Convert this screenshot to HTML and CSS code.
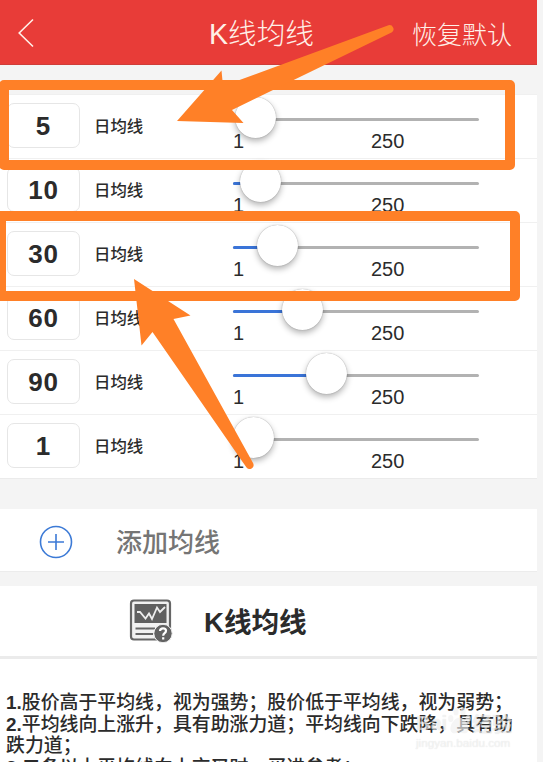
FILE: index.html
```html
<!DOCTYPE html>
<html lang="zh-CN">

<head>
  <meta charset="UTF-8">
  <meta name="viewport" content="width=device-width, initial-scale=1.0">
  <title>K线均线</title>
  <link rel="stylesheet" href="styles.css">
</head>

<body>

  <div class="screen">
    <header class="navbar">
      <svg class="back" viewBox="0 0 16 30" width="16" height="30">
        <path d="M15 1.5 L1.2 15 L15 28.5" />
      </svg>
      <h1>K线均线</h1>
      <span class="reset">恢复默认</span>
    </header>

    <!-- Moving average rows -->
    <div class="ma-list">
      <div class="ma-row">
        <div class="ma-input">5</div>
        <span class="ma-label">日均线</span>
        <div class="slider">
          <div class="track"><div class="fill" style="width: 0"></div><div class="thumb" style="left: 22.5px"></div></div>
          <div class="range"><span>1</span><span>250</span></div>
        </div>
      </div>
      <div class="ma-row">
        <div class="ma-input">10</div>
        <span class="ma-label">日均线</span>
        <div class="slider">
          <div class="track"><div class="fill" style="width: 27px"></div><div class="thumb" style="left: 27px"></div></div>
          <div class="range"><span>1</span><span>250</span></div>
        </div>
      </div>
      <div class="ma-row">
        <div class="ma-input">30</div>
        <span class="ma-label">日均线</span>
        <div class="slider">
          <div class="track"><div class="fill" style="width: 44px"></div><div class="thumb" style="left: 44px"></div></div>
          <div class="range"><span>1</span><span>250</span></div>
        </div>
      </div>
      <div class="ma-row">
        <div class="ma-input">60</div>
        <span class="ma-label">日均线</span>
        <div class="slider">
          <div class="track"><div class="fill" style="width: 69px"></div><div class="thumb" style="left: 69px"></div></div>
          <div class="range"><span>1</span><span>250</span></div>
        </div>
      </div>
      <div class="ma-row">
        <div class="ma-input">90</div>
        <span class="ma-label">日均线</span>
        <div class="slider">
          <div class="track"><div class="fill" style="width: 93.5px"></div><div class="thumb" style="left: 93.5px"></div></div>
          <div class="range"><span>1</span><span>250</span></div>
        </div>
      </div>
      <div class="ma-row">
        <div class="ma-input">1</div>
        <span class="ma-label">日均线</span>
        <div class="slider">
          <div class="track"><div class="fill" style="width: 0"></div><div class="thumb" style="left: 20px"></div></div>
          <div class="range"><span>1</span><span>250</span></div>
        </div>
      </div>
    </div>

    <div class="add-row">
      <svg viewBox="0 0 34 34" width="34" height="34">
        <circle cx="17" cy="17" r="15.5" />
        <path d="M9 17 H25 M17 9 V25" />
      </svg>
      <span>添加均线</span>
    </div>

    <!-- Help section -->
    <div class="help-title">
      <svg viewBox="0 0 44 44" width="44" height="44">
        <rect x="2" y="1.5" width="39" height="39" rx="3" fill="#f1f1f1" stroke="#666" stroke-width="2.2" />
        <rect x="5.5" y="5" width="32" height="19" fill="#606060" />
        <path d="M8 13 L11 13 L16.500 19.500 L20 14.500 L23 20 L28 8.500 L31 13 L36 8" fill="none" stroke="#eee" stroke-width="1.8" />
        <path d="M6.500 29.500 H26 M6.500 35 H24" stroke="#666" stroke-width="1.8" />
        <circle cx="34" cy="34.500" r="9.200" fill="#626262" stroke="#f1f1f1" stroke-width="1" />
        <path d="M31 32 Q31.200 29.300 34 29.300 Q37 29.300 37 31.800 Q37 33.300 35.500 34.200 Q34.200 35 34.200 36.800 M34.200 38.300 V40.500" fill="none" stroke="#fff" stroke-width="2.200" />
      </svg>
      <h2>K线均线</h2>
    </div>
    <div class="help-text">
      <p><b>1.</b>股价高于平均线，视为强势；股价低于平均线，视为弱势；</p>
      <p><b>2.</b>平均线向上涨升，具有助涨力道；平均线向下跌降，具有助</p>
      <p>跌力道；</p>
      <p><b>3.</b>二条以上平均线向上交叉时，买进参考；</p>
    </div>
  </div>

  <!-- Highlight boxes and arrows over the list -->
  <svg class="marks" viewBox="0 0 543 762" width="543" height="762">
    <rect x="4" y="85" width="506" height="80" />
    <rect x="1" y="216" width="514" height="80" />
    <path d="M177 121 L221.5 70.5 L223 86 L388.5 25.3 A4 4 0 0 1 392 32.3 L232 110 L243.5 123 Z" />
    <path d="M134 279 L190.5 315.5 L173.5 319 L253.3 463.5 A4 4 0 0 1 246.5 467.5 L152.5 332 L141.5 345.5 Z" />
  </svg>

  <div class="watermark">
    <div class="brand">
      <span>Bai</span>
      <svg viewBox="0 0 28 32" width="25" height="28">
        <ellipse cx="4" cy="13" rx="3" ry="4" />
        <ellipse cx="10" cy="5" rx="3" ry="4.5" />
        <ellipse cx="18" cy="5" rx="3" ry="4.5" />
        <ellipse cx="24" cy="13" rx="3" ry="4" />
        <path d="M14 12 C20 12 26 22 24 27 C22 32 17 29 14 29 C11 29 6 32 4 27 C2 22 8 12 14 12 Z" />
      </svg>
      <span>经验</span>
    </div>
    <div class="site">jingyan.baidu.com</div>
  </div>

</body>

</html>
```

FILE: styles.css
```css
body {
  margin: 0;
  height: 762px;
  overflow: hidden;
  position: relative;
  background-color: #f4f4f4;
  font-family: "Liberation Sans", "Noto Sans CJK SC", sans-serif;
  color: #2b2b2b;
}

.screen {
  width: 537px;
}

.navbar {
  display: flex;
  align-items: center;
  height: 65px;
  box-sizing: border-box;
  padding: 1px 25px 0 18px;
  background-color: #e83c38;
  border-bottom: 1px solid #cf3d39;
  color: #fff0e8;
  margin-bottom: 29px;
}

.back path {
  fill: none;
  stroke: #fff0e8;
  stroke-width: 1.6;
}

.navbar h1 {
  flex: 1;
  margin: 0 0 2px 175px;
  font-size: 28.6px;
  font-weight: 300;
  white-space: nowrap;
}

.reset {
  font-size: 25px;
  font-weight: 300;
}

.ma-list {
  background-color: #fff;
  border-bottom: 1px solid #ebebeb;
}

.ma-row {
  display: flex;
  height: 64px;
  box-sizing: border-box;
  border-top: 1px solid #f0f0f0;
  padding-left: 7px;
}

.ma-input {
  width: 73px;
  height: 45px;
  box-sizing: border-box;
  margin-top: 8px;
  border: 1px solid #e6e6e6;
  border-radius: 7px;
  font-size: 26px;
  font-weight: bold;
  letter-spacing: 0.8px;
  line-height: 44px;
  text-align: center;
}

.ma-label {
  width: 139px;
  margin-left: 14px;
  font-size: 16.4px;
  font-weight: 500;
  line-height: 63px;
}

.slider {
  width: 246px;
  padding-top: 23px;
}

.track {
  position: relative;
  height: 3px;
  border-radius: 2px;
  background-color: #b2b2b2;
}

.fill {
  height: 3px;
  border-radius: 2px;
  background-color: #3a74d8;
}

.thumb {
  position: absolute;
  top: -21.5px;
  width: 41px;
  height: 41px;
  margin-left: -20.5px;
  border-radius: 50%;
  background-color: #fff;
  box-shadow: 0 0 1px rgba(0, 0, 0, 0.4), 0 3px 6px rgba(0, 0, 0, 0.3);
}

.range {
  display: flex;
  position: relative;
  font-size: 20px;
  line-height: 23px;
  margin-top: 9px;
}

.range span:first-child {
  width: 138px;
}

.add-row {
  display: flex;
  align-items: center;
  height: 62px;
  margin-top: 30px;
  padding-left: 39px;
  background-color: #fff;
  font-size: 26px;
  font-weight: 500;
  color: #757575;
  border-bottom: 1px solid #ececec;
}

.add-row svg {
  margin-right: 43px;
  margin-top: 4px;
  fill: none;
  stroke: #3c7ad6;
  stroke-width: 1.6;
}

.help-title {
  display: flex;
  align-items: center;
  height: 70px;
  margin-top: 14px;
  padding-left: 129px;
  background-color: #fff;
  border-bottom: 3px solid #ebebeb;
}

.help-title h2 {
  margin: 0 0 3px 31px;
  font-size: 27.6px;
  font-weight: bold;
}

.help-text {
  height: 103px;
  box-sizing: border-box;
  overflow: hidden;
  padding: 33px 0 0 6px;
  background-color: #fff;
}

.help-text p {
  margin: 0;
  font-size: 18.9px;
  font-weight: 500;
  line-height: 21.7px;
  white-space: nowrap;
}

.marks {
  position: absolute;
  top: 0;
  left: 0;
}

.marks rect {
  fill: none;
  stroke: #ff8027;
  stroke-width: 10;
  stroke-linejoin: round;
}

.marks path {
  fill: #ff8027;
}

.watermark {
  position: absolute;
  left: 416px;
  top: 709px;
  width: 100px;
  color: rgba(255, 255, 255, 0.6);
  text-shadow: 0 0 1px rgba(0, 0, 0, 0.15);
}

.brand {
  display: flex;
  align-items: center;
  height: 28px;
  font-size: 20px;
  font-weight: bold;
  white-space: nowrap;
}

.brand svg {
  flex: none;
  margin-top: -5px;
  fill: rgba(240, 240, 240, 0.65);
}

.site {
  font-size: 11.7px;
  line-height: 12px;
}
```
